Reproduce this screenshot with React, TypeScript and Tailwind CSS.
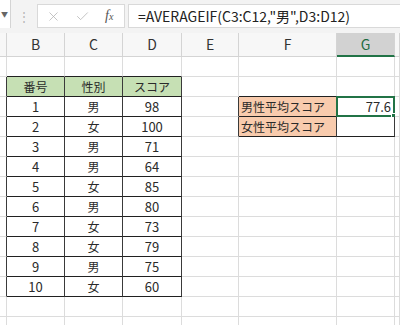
import { X, Check } from "lucide-react";

const colWidths = ["w-[7px]", "w-[58px]", "w-[58px]", "w-[59px]", "w-[57px]", "w-[98px]", "w-[58px]", "w-[5px]"];
const colLetters = ["", "B", "C", "D", "E", "F", "G", ""];

const scores: [string, string, string][] = [
  ["1", "男", "98"],
  ["2", "女", "100"],
  ["3", "男", "71"],
  ["4", "男", "64"],
  ["5", "女", "85"],
  ["6", "男", "80"],
  ["7", "女", "73"],
  ["8", "女", "79"],
  ["9", "男", "75"],
  ["10", "女", "60"],
];

// 罫線のある範囲 (行, 列)
const inTable = (r: number, c: number) => r >= 2 && r <= 12 && c >= 1 && c <= 3;
const inSummary = (r: number, c: number) => r >= 3 && r <= 4 && c >= 5 && c <= 6;
const boxed = (r: number, c: number) => inTable(r, c) || inSummary(r, c);

function cellText(r: number, c: number): string {
  if (r === 2 && c === 1) return "番号";
  if (r === 2 && c === 2) return "性別";
  if (r === 2 && c === 3) return "スコア";
  if (r >= 3 && r <= 12 && c >= 1 && c <= 3) return scores[r - 3][c - 1];
  if (r === 3 && c === 5) return "男性平均スコア";
  if (r === 4 && c === 5) return "女性平均スコア";
  if (r === 3 && c === 6) return "77.6";
  return "";
}

function Cell({ r, c }: { r: number; c: number }) {
  const text = cellText(r, c);
  const isJa = /[^\x00-\x7f]/.test(text);
  const darkRight = boxed(r, c) || boxed(r, c + 1);
  const darkBottom = boxed(r, c) || boxed(r + 1, c);
  const bg =
    r === 2 && inTable(r, c) ? "bg-[#c6e0b4]" : c === 5 && inSummary(r, c) ? "bg-[#f8cbad]" : "bg-white";
  const align = c === 5 ? "justify-start pl-[2px]" : c === 6 ? "justify-end pr-[3px]" : "justify-center";
  const selected = r === 3 && c === 6;

  return (
    <div
      className={`relative h-[20px] shrink-0 flex items-center border-r border-b ${colWidths[c]} ${bg} ${align} ${
        darkRight ? "border-r-[#3a3a3a]" : "border-r-[#dcdcdc]"
      } ${darkBottom ? "border-b-[#202020]" : "border-b-[#dcdcdc]"}`}
    >
      <span className={`whitespace-nowrap ${isJa ? "text-[12px]" : "text-[13px]"}`}>{text}</span>
      {selected && (
        <div className="absolute -left-px -top-px -right-px -bottom-px border-2 border-[#217346]">
          <div className="absolute -right-[4px] -bottom-[4px] w-[6px] h-[6px] bg-[#217346] border border-white" />
        </div>
      )}
    </div>
  );
}

export default function App() {
  const rows = Array.from({ length: 14 }, (_, i) => i + 1);

  return (
    <div
      className="w-[400px] h-[325px] overflow-hidden bg-white text-[13px] text-[#2a2a2a]"
      style={{ fontFamily: '"Noto Sans CJK JP", "Liberation Sans", sans-serif' }}
    >
      {/* 数式バー */}
      <div className="h-[33px] bg-[#f3f3f3] flex items-start pt-[4px]">
        <div className="w-[11px] -mt-[4px] h-[28px] bg-white border-r border-[#d4d4d4] flex items-center justify-start">
          <span className="text-[7px] text-[#666] pl-[1px]">▼</span>
        </div>
        <div className="w-[26px] h-[24px] flex items-center justify-center text-[#b5b5b5] text-[12px] leading-none">⋮</div>
        <div className="w-[88px] h-[24px] bg-white border border-[#d9d9d9] flex items-center text-[#b0b0b0]">
          <X size={15} strokeWidth={1.2} className="ml-[8px]" />
          <Check size={15} strokeWidth={1.2} className="ml-[14px]" />
          <span
            className="ml-[15px] text-[#555] italic text-[14px] leading-none"
            style={{ fontFamily: '"Liberation Serif", serif' }}
          >
            f<span className="text-[10px]">x</span>
          </span>
        </div>
        <div className="flex-1 ml-[3px] h-[24px] bg-white border border-r-0 border-[#d9d9d9] flex items-center pl-[9px] text-[14px] text-[#222] whitespace-nowrap">
          =AVERAGEIF(C3:C12,"男",D3:D12)
        </div>
      </div>

      {/* 列見出し */}
      <div className="flex h-[24px] text-[14px]">
        {colLetters.map((l, c) => (
          <div
            key={c}
            className={`h-[24px] shrink-0 flex items-center justify-center border-r border-[#d4d4d4] ${colWidths[c]} ${
              c === 6 ? "bg-[#d2d2d2] text-[#1e6b41] border-b-2 border-b-[#217346]" : "bg-[#f7f7f7] text-[#333] border-b border-b-[#d4d4d4]"
            }`}
          >
            {l}
          </div>
        ))}
      </div>

      {/* セル */}
      {rows.map((r) => (
        <div key={r} className="flex">
          {colWidths.map((_, c) => (
            <Cell key={c} r={r} c={c} />
          ))}
        </div>
      ))}
    </div>
  );
}
